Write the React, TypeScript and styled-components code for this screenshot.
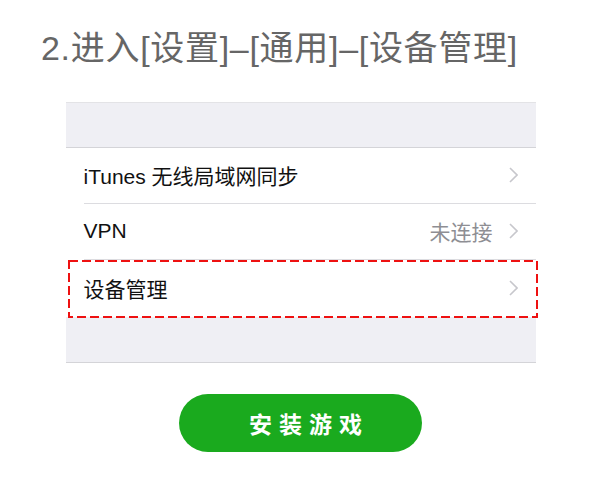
import React from "react";
import styled, { createGlobalStyle } from "styled-components";

const GlobalStyle = createGlobalStyle`
  html, body {
    margin: 0;
    padding: 0;
    background: #fff;
    font-family: "Liberation Sans", "Noto Sans CJK SC", sans-serif;
  }
`;

const Page = styled.div`
  width: 601px;
  height: 500px;
  display: flex;
  flex-direction: column;
  align-items: center;
  overflow: hidden;
`;

const Title = styled.h1`
  align-self: flex-start;
  margin: 24px 0 0 41px;
  font-size: 34px;
  font-weight: 400;
  line-height: 48px;
  letter-spacing: 0.7px;
  color: #666;
  white-space: nowrap;
`;

const Panel = styled.div`
  width: 470px;
  margin-top: 30px;
  border-top: 1px solid #e3e3e6;
  border-bottom: 1px solid #d4d4d8;
  display: flex;
  flex-direction: column;
`;

const Gap = styled.div<{ $h: number }>`
  height: ${(p) => p.$h}px;
  background: #efeff4;
`;

const Group = styled.div`
  background: #fff;
  border-top: 1px solid #d4d4d8;
  padding-left: 18px;
`;

const Row = styled.div<{ $last?: boolean }>`
  box-sizing: border-box;
  height: ${(p) => (p.$last ? 57 : 56)}px;
  display: flex;
  align-items: center;
  padding: 0 18px 2px 0;
  border-bottom: ${(p) => (p.$last ? "none" : "1px solid #dcdce0")};
  position: relative;
  font-size: 21px;
  color: #111;
`;

const Marker = styled.svg`
  position: absolute;
  left: -16px;
  top: 0;
  width: 470px;
  height: 58px;
  pointer-events: none;
`;

const Label = styled.span`
  flex: 1;
`;

const Detail = styled.span`
  color: #8e8e93;
  margin-right: 16px;
`;

const Chevron = () => (
  <svg width="9" height="16" viewBox="0 0 9 16">
    <path d="M1 1l7 7-7 7" fill="none" stroke="#c7c7cc" strokeWidth="1.6" />
  </svg>
);

const InstallButton = styled.button`
  margin-top: 31px;
  width: 243px;
  height: 58px;
  border: none;
  border-radius: 29px;
  background: #1aaa1e;
  color: #fff;
  font-family: "Noto Sans CJK SC", sans-serif;
  font-size: 23px;
  font-weight: 700;
  letter-spacing: 7px;
  padding: 0 0 0 17px;
`;

export default function App() {
  return (
    <>
      <GlobalStyle />
      <Page>
        <Title>2.进入[设置]–[通用]–[设备管理]</Title>
        <Panel>
          <Gap $h={44} />
          <Group>
            <Row>
              <Label>iTunes 无线局域网同步</Label>
              <Chevron />
            </Row>
            <Row>
              <Label>VPN</Label>
              <Detail>未连接</Detail>
              <Chevron />
            </Row>
            <Row $last>
              <Marker viewBox="0 0 470 58">
                <rect
                  x="1"
                  y="1"
                  width="468"
                  height="56"
                  fill="none"
                  stroke="#ee1111"
                  strokeWidth="2"
                  strokeDasharray="9 4"
                />
              </Marker>
              <Label>设备管理</Label>
              <Chevron />
            </Row>
          </Group>
          <Gap $h={45} />
        </Panel>
        <InstallButton>安装游戏</InstallButton>
      </Page>
    </>
  );
}
